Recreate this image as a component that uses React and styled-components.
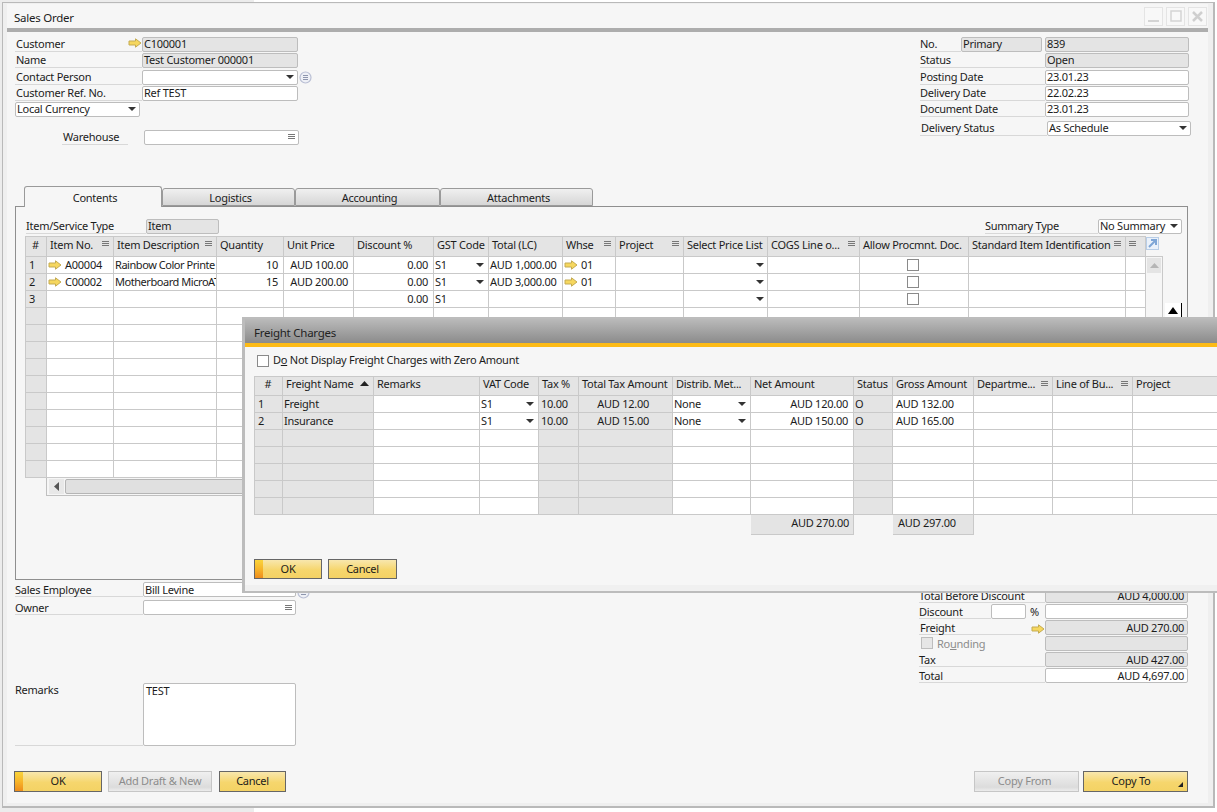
import React from 'react';
import styled, { createGlobalStyle } from 'styled-components';

const GlobalStyle = createGlobalStyle`
  html, body { margin: 0; padding: 0; background: #fff; }
  body {
    font-family: "Noto Sans", "DejaVu Sans", "Liberation Sans", sans-serif;
    font-size: 11px;
    line-height: 13px;
    letter-spacing: -0.25px;
    color: #1c1c1c;
  }
  * { box-sizing: border-box; }
`;

const IconSvg = styled.svg`
  flex: none;
`;

const Arrow = () => (
  <IconSvg width="14" height="10" viewBox="0 0 14 10">
    <path d="M1 3h6.500V.8L13 5 7.500 9.200V7H1z" fill="#f6d75e" stroke="#c4ab52" strokeWidth="1" />
  </IconSvg>
);

const Caret = () => (
  <IconSvg width="8" height="4" viewBox="0 0 8 4">
    <path d="M0 0h8L4 4z" fill="#333" />
  </IconSvg>
);

const Lines = () => (
  <IconSvg width="7" height="6" viewBox="0 0 7 6">
    <path d="M0 .5h7M0 2.500h7M0 4.500h7" stroke="#777" strokeWidth="1" />
  </IconSvg>
);

const InfoDot = () => (
  <IconSvg width="13" height="13" viewBox="0 0 13 13">
    <circle cx="6.500" cy="6.500" r="5.500" fill="#eef0f6" stroke="#b9bfd4" strokeWidth="1.200" />
    <path d="M4 4.500h5M4 6.500h5M4 8.500h5" stroke="#8e96ad" strokeWidth="1" />
  </IconSvg>
);

const Page = styled.div`
  position: relative;
  width: 1217px;
  height: 812px;
  overflow: hidden;
  background: linear-gradient(90deg, #ececec 254px, #fff 254px);
`;

const Frame = styled.div`
  position: relative;
  margin: 2px 2px 0 2px;
  width: 1213px;
  height: 806px;
  border: 2px solid #b9b9b9;
  border-width: 1px 2px 2px 1px;
  background: #efefef;
  padding: 1px 5px 3px 4px;
`;

const Inner = styled.div`
  height: 100%;
  background: #f6f6f6;
`;

const TitleBar = styled.div`
  height: 24px;
  padding: 0 1px 0 7px;
  display: flex;
  align-items: center;
  justify-content: space-between;
  font-size: 11.500px;
`;

const TitleText = styled.span`
  padding-top: 2px;
`;

const WinButtons = styled.div`
  display: flex;
  gap: 3px;
`;

const WinBtn = styled.div`
  width: 19px;
  height: 19px;
  border: 1px solid #e4e4e4;
  background: #f8f8f8;
  display: flex;
  align-items: center;
  justify-content: center;
`;

const GreyBar = styled.div`
  height: 4px;
  background: #adadad;
`;

const Column = styled.div`
  width: ${p => p.$w}px;
`;

const Row = styled.div`
  display: flex;
  height: 16px;
  margin-top: ${p => p.$mt || 0}px;
  margin-left: ${p => p.$ml || 0}px;
`;

const Label = styled.div`
  flex: none;
  width: ${p => p.$w}px;
  height: 15px;
  padding-left: ${p => p.$pl ?? 1}px;
  border-bottom: 1px solid ${p => (p.$plain ? 'transparent' : '#d8d8d8')};
  color: ${p => (p.$muted ? '#8c8c8c' : 'inherit')};
  display: flex;
  align-items: center;
  justify-content: ${p => (p.$start ? 'flex-start' : 'space-between')};
  gap: 4px;
  white-space: nowrap;
`;

const Field = styled.div`
  flex: none;
  width: ${p => p.$w}px;
  height: ${p => p.$h || 15}px;
  margin-left: ${p => p.$ml || 0}px;
  padding: ${p => (p.$top ? '0 2px' : '0 3px 0 1px')};
  background: ${p => (p.$ro ? '#e4e4e4' : '#fff')};
  border: 1px solid #bdbdbd;
  border-radius: 2px;
  display: flex;
  align-items: ${p => (p.$top ? 'flex-start' : 'center')};
  justify-content: ${p => (p.$right ? 'flex-end' : 'space-between')};
  white-space: nowrap;
  overflow: hidden;
`;

const Header = styled.div`
  height: 154px;
  padding: 5px 17px 0 8px;
  display: flex;
  justify-content: space-between;
  ${Field}, ${Label} {
    padding-bottom: 2px;
  }
`;

const DotSlot = styled.span`
  margin: ${p => p.$mt || 1}px 0 0 1px;
`;

const Tabs = styled.div`
  position: relative;
  z-index: 1;
  height: 20px;
  margin-left: 17px;
  display: flex;
  align-items: flex-end;
`;

const Tab = styled.div`
  width: ${p => p.$w}px;
  height: ${p => (p.$active ? 21 : 18)}px;
  margin-bottom: ${p => (p.$active ? -1 : 0)}px;
  padding-left: 4px;
  border: 1px solid #9a9a9a;
  border-bottom: ${p => (p.$active ? '0' : '1px solid #9a9a9a')};
  border-radius: 3px 3px 0 0;
  background: ${p => (p.$active ? '#f6f6f6' : 'linear-gradient(#f0f0f0, #d6d6d6)')};
  display: flex;
  align-items: center;
  justify-content: center;
`;

const Panel = styled.div`
  position: relative;
  width: 1173px;
  height: 374px;
  margin-left: 8px;
  border: 1px solid #8f8f8f;
  padding: 12px 5px 0 9px;
`;

const PanelTop = styled.div`
  height: 17px;
  display: flex;
  justify-content: space-between;
  ${Field}, ${Label} {
    padding-bottom: 2px;
  }
`;

const TopGroup = styled.div`
  display: flex;
  padding-left: 1px;
`;

const TableWrap = styled.div`
  display: flex;
  align-items: flex-start;
`;

const DataGrid = styled.div`
  display: grid;
  grid-template-columns: ${p => p.$cols};
  grid-template-rows: ${p => p.$head}px;
  grid-auto-rows: 17px;
  border-left: 1px solid #c9c9c9;
  border-top: 1px solid #c9c9c9;
  width: max-content;
`;

const HeadCell = styled.div`
  padding: 0 4px 5px 3px;
  background: #e4e4e4;
  border-right: 1px solid #c9c9c9;
  border-bottom: 1px solid #c9c9c9;
  display: flex;
  align-items: center;
  justify-content: ${p => (p.$center ? 'center' : 'space-between')};
  white-space: nowrap;
  overflow: hidden;
`;

const Cell = styled.div`
  padding: 0 ${p => p.$pr ?? (p.$right ? 5 : 4)}px 1px ${p => p.$pl ?? 1}px;
  background: ${p => (p.$grey ? '#e4e4e4' : '#fff')};
  border-right: 1px solid #c9c9c9;
  border-bottom: 1px solid #c9c9c9;
  display: flex;
  align-items: center;
  justify-content: ${p => (p.$center ? 'center' : p.$right ? 'flex-end' : p.$start ? 'flex-start' : 'space-between')};
  gap: 3px;
  letter-spacing: ${p => (p.$tight ? '-0.45px' : 'inherit')};
  white-space: nowrap;
  overflow: hidden;
`;

const Check = styled.div`
  width: ${p => p.$s || 12}px;
  height: ${p => p.$s || 12}px;
  flex: none;
  background: ${p => (p.$off ? '#e6e6e6' : '#fff')};
  border: 1px solid ${p => (p.$off ? '#bdbdbd' : '#8a8a8a')};
`;

const ScrollSide = styled.div`
  width: 17px;
  display: flex;
  flex-direction: column;
`;

const ExpandBtn = styled.div`
  height: 13px;
  width: 13px;
  margin: 1px 0 6px 0;
  background: #eaf1fa;
  border: 1px solid #b8cde6;
  display: flex;
`;

const ScrollTrack = styled.div`
  height: 221px;
  border-top: 1px solid #c9c9c9;
  border-right: 1px solid #c9c9c9;
  padding: 1px;
`;

const ScrollBtn = styled.div`
  height: 15px;
  background: #e4e4e4;
  display: flex;
  align-items: center;
  justify-content: center;
`;

const HScroll = styled.div`
  height: 18px;
  margin-left: 21px;
  width: 1099px;
  border: 1px solid #c0c0c0;
  border-top: 0;
  padding: 1px 2px;
  display: flex;
  gap: 1px;
`;

const HScrollBtn = styled.div`
  width: 15px;
  background: #e8e8e8;
  display: flex;
  align-items: center;
  justify-content: center;
`;

const HScrollThumb = styled.div`
  flex: 1;
  background: #e0e0e0;
  border: 1px solid #b5b5b5;
  border-radius: 2px;
`;

const ClippedArrow = styled.div`
  position: absolute;
  left: 1149px;
  top: 96px;
  width: 17px;
  height: 14px;
  background: #fff;
  border-right: 1px solid #000;
  display: flex;
  align-items: center;
  justify-content: center;
`;

const Bottom = styled.div`
  height: 191px;
  padding: 2px 20px 0 8px;
  display: flex;
  justify-content: space-between;
`;

const LeftBottom = styled.div`
  width: 300px;
`;

const OwnerRow = styled(Row)`
  margin-top: 2px;
`;

const RemarksRow = styled.div`
  display: flex;
  margin-top: 67px;
`;

const RemarksLabel = styled(Label)`
  height: 63px;
  width: 128px;
  align-items: flex-start;
`;

const RightBottom = styled.div`
  width: 269px;
  padding-top: 6px;
`;

const FreightSlot = styled.span`
  width: 14px;
  padding-top: 3px;
`;

const Footer = styled.div`
  padding: 0 20px 0 7px;
  display: flex;
  justify-content: space-between;
  button {
    padding-bottom: 3px;
  }
`;

const ButtonGroup = styled.div`
  display: flex;
  gap: ${p => p.$gap}px;
`;

const Btn = styled.button`
  position: relative;
  width: ${p => p.$w}px;
  height: ${p => p.$h || 21}px;
  margin: 0 0 0 ${p => p.$ml || 0}px;
  padding: 0 ${p => p.$pr || 0}px ${p => p.$pb || 0}px 0;
  font: inherit;
  letter-spacing: inherit;
  color: ${p => (p.$disabled ? '#8c8c8c' : '#1c1c1c')};
  border: 1px solid ${p => (p.$disabled ? '#c6c6c6' : '#666')};
  background: ${p =>
    p.$disabled
      ? 'linear-gradient(#f0f0f0, #dcdcdc 80%, #ececec)'
      : 'linear-gradient(#f8e7ae, #f6d66d 55%, #f4d264)'};
  &::before {
    content: ${p => (p.$primary ? '""' : 'none')};
    position: absolute;
    left: 0;
    top: 0;
    bottom: 0;
    width: 8px;
    background: linear-gradient(#fad43c, #f7b52a 50%, #ee8d1c);
  }
`;

const CornerMark = styled.span`
  position: absolute;
  right: 4px;
  bottom: 4px;
  width: 0;
  height: 0;
  border-left: 5px solid transparent;
  border-bottom: 5px solid #222;
`;

const Dialog = styled.div`
  position: absolute;
  left: 242px;
  top: 317px;
  width: 1000px;
  height: 276px;
  background: #f6f6f6;
  border: 3px solid #bcbcbc;
  border-width: 2px 0 2px 3px;
  box-shadow: inset 0 -6px 0 #f0f0f0;
`;

const DialogTitle = styled.div`
  height: 24px;
  padding: 2px 0 0 9px;
  background: linear-gradient(#bababa, #8b8b8b);
  display: flex;
  align-items: center;
  font-size: 11.500px;
  color: #222;
`;

const OrangeBar = styled.div`
  height: 4px;
  background: #fdbb17;
`;

const DialogBody = styled.div`
  padding-left: 9px;
`;

const CheckRow = styled.label`
  height: 29px;
  padding: 8px 0 0 3px;
  display: flex;
  align-items: flex-start;
  gap: 4px;
  span {
    margin-top: -2px;
  }
`;

const TotalsRow = styled.div`
  display: grid;
  grid-template-columns: ${p => p.$cols};
  height: 20px;
  padding-left: 1px;
  width: max-content;
`;

const TotalCell = styled.div`
  grid-column: ${p => p.$col};
  grid-row: 1;
  background: #e4e4e4;
  border-right: 1px solid #c9c9c9;
  border-bottom: 1px solid #c9c9c9;
  padding: 0 4px 4px 5px;
  display: flex;
  align-items: center;
  justify-content: ${p => (p.$right ? 'flex-end' : 'flex-start')};
`;

const DialogButtons = styled.div`
  margin-top: 24px;
  display: flex;
  gap: 6px;
`;

const mainCols = '21px 67px 103px 67px 70px 80px 55px 74px 53px 68px 84px 92px 109px 157px 20px';
const mainHead = [
  ['#', false, true], ['Item No.', true], ['Item Description', true], ['Quantity'], ['Unit Price'],
  ['Discount %'], ['GST Code'], ['Total (LC)'], ['Whse', true], ['Project', true],
  ['Select Price List'], ['COGS Line o...', true], ['Allow Procmnt. Doc.'],
  ['Standard Item Identification', true], ['', true],
];

const mainRows = [
  { no: '1', item: 'A00004', desc: 'Rainbow Color Printe', qty: '10', price: 'AUD 100.00', disc: '0.00', gst: 'S1', total: 'AUD 1,000.00', wh: '01' },
  { no: '2', item: 'C00002', desc: 'Motherboard MicroAT', qty: '15', price: 'AUD 200.00', disc: '0.00', gst: 'S1', total: 'AUD 3,000.00', wh: '01' },
  { no: '3', disc: '0.00', gst: 'S1', third: true },
];

const freightCols = '28px 91px 106px 59px 40px 94px 78px 103px 39px 81px 79px 80px 120px';
const freightHead = [
  '#', 'Freight Name', 'Remarks', 'VAT Code', 'Tax %', 'Total Tax Amount', 'Distrib. Met...',
  'Net Amount', 'Status', 'Gross Amount', 'Departme...', 'Line of Bu...', 'Project',
];
const freightRows = [
  ['1', 'Freight', 'AUD 12.00', 'AUD 120.00', 'AUD 132.00'],
  ['2', 'Insurance', 'AUD 15.00', 'AUD 150.00', 'AUD 165.00'],
  [], [], [], [], [],
];

function MainRow({ r }) {
  return (
    <>
      <Cell $grey $pl={3}>{r.no}</Cell>
      <Cell $start>{r.item && <Arrow />}{r.item}</Cell>
      <Cell $start $pr={0} $tight>{r.desc}</Cell>
      <Cell $right>{r.qty}</Cell>
      <Cell $right>{r.price}</Cell>
      <Cell $right>{r.disc}</Cell>
      <Cell>{r.gst}{r.gst && !r.third && <Caret />}</Cell>
      <Cell $pr={1}>{r.total}</Cell>
      <Cell $start>{r.wh && <Arrow />}{r.wh}</Cell>
      <Cell />
      <Cell $right $pr={3}><Caret /></Cell>
      <Cell />
      <Cell $center><Check /></Cell>
      <Cell />
      <Cell />
    </>
  );
}

function EmptyRow() {
  return mainHead.map((h, i) => <Cell key={i} $grey={i === 0} />);
}

function FreightRow({ r }) {
  const [no, name, tax, net, gross] = r;
  const filled = Boolean(no);
  return (
    <>
      <Cell $grey $pl={3}>{no}</Cell>
      <Cell $grey>{name}</Cell>
      <Cell />
      <Cell>{filled && 'S1'}{filled && <Caret />}</Cell>
      <Cell $grey $pl={2}>{filled && '10.00'}</Cell>
      <Cell $grey $right $pr={23}>{tax}</Cell>
      <Cell>{filled && 'None'}{filled && <Caret />}</Cell>
      <Cell $right>{net}</Cell>
      <Cell $grey>{filled && 'O'}</Cell>
      <Cell $pl={3}>{gross}</Cell>
      <Cell />
      <Cell />
      <Cell />
    </>
  );
}

export default function App() {
  return (
    <Page>
      <GlobalStyle />
      <Frame>
        <Inner>
          <TitleBar>
            <TitleText>Sales Order</TitleText>
            <WinButtons>
              <WinBtn>
                <svg width="11" height="11" viewBox="0 0 11 11"><path d="M0 10h11" stroke="#d4d4d4" strokeWidth="2" /></svg>
              </WinBtn>
              <WinBtn>
                <svg width="12" height="12" viewBox="0 0 12 12"><rect x="1" y="1" width="10" height="10" fill="none" stroke="#d4d4d4" strokeWidth="1.500" /></svg>
              </WinBtn>
              <WinBtn>
                <svg width="11" height="11" viewBox="0 0 11 11"><path d="M1 1l9 9M10 1l-9 9" stroke="#cfcfcf" strokeWidth="2.500" /></svg>
              </WinBtn>
            </WinButtons>
          </TitleBar>
          <GreyBar />

          <Header>
            <Column $w={300}>
              <Row>
                <Label $w={127}>Customer<Arrow /></Label>
                <Field $w={156} $ro>C100001</Field>
              </Row>
              <Row>
                <Label $w={127}>Name</Label>
                <Field $w={156} $ro>Test Customer 000001</Field>
              </Row>
              <Row $mt={1}>
                <Label $w={127}>Contact Person</Label>
                <Field $w={156}><span /><Caret /></Field>
                <DotSlot><InfoDot /></DotSlot>
              </Row>
              <Row>
                <Label $w={127}>Customer Ref. No.</Label>
                <Field $w={156}>Ref TEST</Field>
              </Row>
              <Row>
                <Field $w={125}>Local Currency<Caret /></Field>
              </Row>
              <Row $mt={12} $ml={47}>
                <Label $w={66}>Warehouse</Label>
                <Field $w={155} $ml={16}><span /><Lines /></Field>
              </Row>
            </Column>
            <Column $w={271}>
              <Row>
                <Label $w={41} $pl={0}>No.</Label>
                <Field $w={81} $ro>Primary</Field>
                <Field $w={144} $ml={3} $ro>839</Field>
              </Row>
              <Row>
                <Label $w={125} $pl={0}>Status</Label>
                <Field $w={144} $ro>Open</Field>
              </Row>
              <Row $mt={1}>
                <Label $w={125} $pl={0}>Posting Date</Label>
                <Field $w={144}>23.01.23</Field>
              </Row>
              <Row>
                <Label $w={125} $pl={0}>Delivery Date</Label>
                <Field $w={144}>22.02.23</Field>
              </Row>
              <Row>
                <Label $w={125} $pl={0}>Document Date</Label>
                <Field $w={144}>23.01.23</Field>
              </Row>
              <Row $mt={3}>
                <Label $w={127} $pl={1}>Delivery Status</Label>
                <Field $w={144}>As Schedule<Caret /></Field>
              </Row>
            </Column>
          </Header>

          <Tabs>
            <Tab $w={138} $active>Contents</Tab>
            <Tab $w={133}>Logistics</Tab>
            <Tab $w={145}>Accounting</Tab>
            <Tab $w={153}>Attachments</Tab>
          </Tabs>

          <Panel>
            <PanelTop>
              <TopGroup>
                <Label $w={120} $pl={0}>Item/Service Type</Label>
                <Field $w={73} $ro>Item</Field>
              </TopGroup>
              <TopGroup>
                <Label $w={113} $pl={0}>Summary Type</Label>
                <Field $w={84}>No Summary<Caret /></Field>
              </TopGroup>
            </PanelTop>
            <TableWrap>
              <DataGrid $cols={mainCols} $head={20}>
                {mainHead.map(([text, menu, center], i) => (
                  <HeadCell key={i} $center={center}>
                    {text}{menu && <Lines />}
                  </HeadCell>
                ))}
                {mainRows.map(r => <MainRow key={r.no} r={r} />)}
                {Array.from({ length: 10 }, (_, i) => <EmptyRow key={i} />)}
              </DataGrid>
              <ScrollSide>
                <ExpandBtn>
                  <svg width="11" height="11" viewBox="0 0 11 11">
                    <path d="M2 9l6-6M4 2h5v5" fill="none" stroke="#7fa6d6" strokeWidth="2" />
                  </svg>
                </ExpandBtn>
                <ScrollTrack>
                  <ScrollBtn>
                    <svg width="9" height="5" viewBox="0 0 9 5"><path d="M0 5h9L4.500 0z" fill="#b5b5b5" /></svg>
                  </ScrollBtn>
                </ScrollTrack>
              </ScrollSide>
            </TableWrap>
            <HScroll>
              <HScrollBtn>
                <svg width="5" height="9" viewBox="0 0 5 9"><path d="M5 0v9L0 4.500z" fill="#555" /></svg>
              </HScrollBtn>
              <HScrollThumb />
            </HScroll>
            <ClippedArrow>
              <svg width="10" height="7" viewBox="0 0 10 7"><path d="M0 7h10L5 0z" fill="#000" /></svg>
            </ClippedArrow>
          </Panel>

          <Bottom>
            <LeftBottom>
              <Row>
                <Label $w={128} $pl={0}>Sales Employee</Label>
                <Field $w={153}>Bill Levine</Field>
                <DotSlot $mt={4}><InfoDot /></DotSlot>
              </Row>
              <OwnerRow>
                <Label $w={128} $pl={0}>Owner</Label>
                <Field $w={153}><span /><Lines /></Field>
              </OwnerRow>
              <RemarksRow>
                <RemarksLabel $pl={0}>Remarks</RemarksLabel>
                <Field $w={153} $h={63} $top>TEST</Field>
              </RemarksRow>
            </LeftBottom>
            <RightBottom>
              <Row>
                <Label $w={126} $pl={0}>Total Before Discount</Label>
                <Field $w={143} $ro $right>AUD 4,000.00</Field>
              </Row>
              <Row>
                <Label $w={72} $pl={0}>Discount</Label>
                <Field $w={35}></Field>
                <Label $w={19} $pl={4} $plain>%</Label>
                <Field $w={143}></Field>
              </Row>
              <Row>
                <Label $w={112} $pl={1}>Freight</Label>
                <FreightSlot><Arrow /></FreightSlot>
                <Field $w={143} $ro $right>AUD 270.00</Field>
              </Row>
              <Row>
                <Label $w={126} $muted $start $plain $pl={2}>
                  <Check $off />
                  <span>Ro<u>u</u>nding</span>
                </Label>
                <Field $w={143} $ro />
              </Row>
              <Row>
                <Label $w={126} $pl={0}>Tax</Label>
                <Field $w={143} $ro $right>AUD 427.00</Field>
              </Row>
              <Row>
                <Label $w={126} $pl={0}>Total</Label>
                <Field $w={143} $right>AUD 4,697.00</Field>
              </Row>
            </RightBottom>
          </Bottom>

          <Footer>
            <ButtonGroup $gap={6}>
              <Btn $w={88} $primary>OK</Btn>
              <Btn $w={104} $disabled>Add Draft &amp; New</Btn>
              <Btn $w={67} $ml={1}>Cancel</Btn>
            </ButtonGroup>
            <ButtonGroup $gap={4}>
              <Btn $w={105} $disabled $pr={4}>Copy From</Btn>
              <Btn $w={105} $pr={9}>Copy To<CornerMark /></Btn>
            </ButtonGroup>
          </Footer>
        </Inner>
      </Frame>

      <Dialog>
        <DialogTitle>Freight Charges</DialogTitle>
        <OrangeBar />
        <DialogBody>
          <CheckRow>
            <Check />
            <span>D<u>o</u> Not Display Freight Charges with Zero Amount</span>
          </CheckRow>
          <DataGrid $cols={freightCols} $head={19}>
            {freightHead.map((text, i) => (
              <HeadCell key={i} $center={i === 0}>
                {text}
                {i === 1 && (
                  <svg width="9" height="5" viewBox="0 0 9 5"><path d="M0 5h9L4.500 0z" fill="#222" /></svg>
                )}
                {(i === 10 || i === 11) && <Lines />}
              </HeadCell>
            ))}
            {freightRows.map((r, i) => <FreightRow key={i} r={r} />)}
          </DataGrid>
          <TotalsRow $cols={freightCols}>
            <TotalCell $col="8" $right>AUD 270.00</TotalCell>
            <TotalCell $col="10">AUD 297.00</TotalCell>
          </TotalsRow>
          <DialogButtons>
            <Btn $w={68} $h={20} $primary $pb={2}>OK</Btn>
            <Btn $w={69} $h={20} $pb={2}>Cancel</Btn>
          </DialogButtons>
        </DialogBody>
      </Dialog>
    </Page>
  );
}
